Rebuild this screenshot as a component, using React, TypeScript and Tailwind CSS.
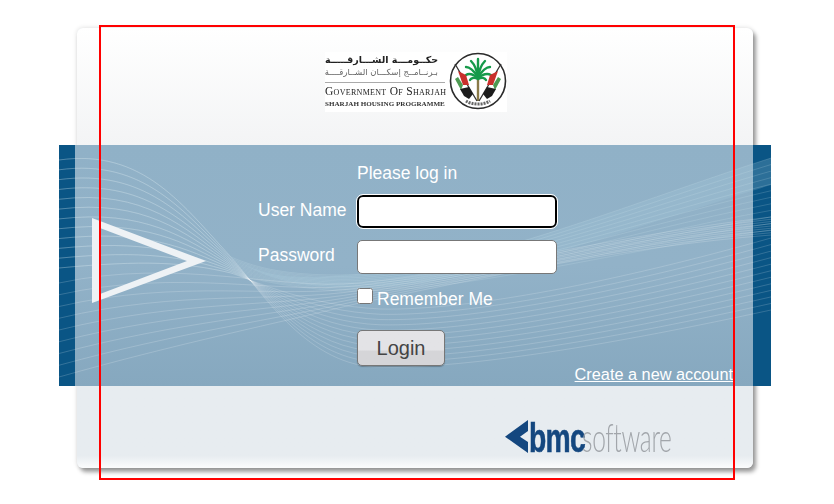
import React from "react";

const SANS = "font-['Liberation_Sans',Arial,sans-serif]";

// upper lines of the fan: same start, split at the pinch into two bundles
function upperPath(t: number) {
  const y = 15 + 108 * t;
  return `M0 ${y} C85 ${y - 12 + 4 * t} 125 ${62 + 55 * t} 172 ${112 + 16 * t}`;
}

function crossingPath(t: number) {
  return `${upperPath(t)} C205 ${150 - 10 * t} 250 ${222 - 62 * t} 321 ${222 - 58 * t} C410 ${224 - 58 * t} 560 ${198 - 62 * t} 712 ${165 - 72 * t}`;
}

function envelopePath(t: number) {
  return `${upperPath(t)} C200 ${124 + 12 * t} 230 ${130 + 12 * t} 280 ${130 + 16 * t} C400 ${130 + 20 * t} 560 ${62 + 42 * t} 712 ${13 + 72 * t}`;
}

function risingPath(t: number) {
  const y = 232 - 94 * t;
  return `M0 ${y} C120 ${y - 34 + 8 * t} 220 ${178 - 32 * t} 300 ${158 - 20 * t} C420 ${134 - 8 * t} 560 ${102 - 12 * t} 712 ${90 - 18 * t}`;
}

const TWELVE = Array.from({ length: 12 }, (_, n) => n / 11);
const NINE = Array.from({ length: 9 }, (_, n) => n / 8);

function Waves() {
  return (
    <svg className="absolute inset-0 h-full w-full" viewBox="0 0 712 241" fill="none">
      <path
        d="M172 112 C205 134 240 134 280 130 C400 130 560 62 712 13 L712 40 C560 86 400 150 280 142 C240 142 205 134 172 112 Z"
        fill="#a9cddd"
        fillOpacity="0.22"
      />
      {TWELVE.map((t) => (
        <path key={`c${t}`} d={crossingPath(t)} stroke="#ffffff" strokeOpacity="0.17" strokeWidth="1" />
      ))}
      {TWELVE.map((t) => (
        <path key={`e${t}`} d={envelopePath(t)} stroke="#d5e9f1" strokeOpacity="0.18" strokeWidth="1" />
      ))}
      {NINE.map((t) => (
        <path key={`r${t}`} d={risingPath(t)} stroke="#ffffff" strokeOpacity="0.18" strokeWidth="1" />
      ))}
      <path d="M33 73 L147 116 L33 158 Z M41 83 L41 149 L128 116 Z" fill="#eef2f5" fillRule="evenodd" />
    </svg>
  );
}

function Emblem() {
  return (
    <svg width="58" height="58" viewBox="0 0 58 58" fill="none" className="shrink-0">
      <circle cx="29" cy="29" r="27.5" fill="#fff" stroke="#2b2b2b" strokeWidth="1.6" />
      {/* palm */}
      <path d="M29 26 L29 49" stroke="#8a7a48" strokeWidth="2.4" />
      <g stroke="#169a4a" strokeWidth="2.4" strokeLinecap="round">
        <path d="M29 26 L29 7" />
        <path d="M29 26 C28 18 25 12 22 9" />
        <path d="M29 26 C30 18 33 12 36 9" />
        <path d="M29 25 C25 19 21 15 17 15" />
        <path d="M29 25 C33 19 37 15 41 15" />
        <path d="M29 26 C24 22 20 21 17 23" />
        <path d="M29 26 C34 22 38 21 42 23" />
        <path d="M29 27 C25 25 22 26 21 28" />
        <path d="M29 27 C33 25 36 26 37 28" />
      </g>
      {/* flags */}
      <path d="M6 12 L28 49" stroke="#333" strokeWidth="1.3" />
      <path d="M52 12 L30 49" stroke="#333" strokeWidth="1.3" />
      <path d="M9 19 L17 23 L20 33 L14 33 Z" fill="#c9302c" />
      <path d="M49 19 L41 23 L38 33 L44 33 Z" fill="#c9302c" />
      <path d="M6 27 L9 25 L14 33 L12 38 Z" fill="#4d9a52" />
      <path d="M52 27 L49 25 L44 33 L46 38 Z" fill="#4d9a52" />
      <path d="M11 37 L20 35 L24 42 L20 47 L15 44 Z" fill="#1c1c1c" />
      <path d="M47 37 L38 35 L34 42 L38 47 L43 44 Z" fill="#1c1c1c" />
      {/* base */}
      <path d="M17 49 C23 53 35 53 41 49" stroke="#666" strokeWidth="3" strokeDasharray="2 1" />
    </svg>
  );
}

function ShjLogo() {
  return (
    <div className="flex h-[60px] w-[182px] items-start bg-white blur-[0.4px]">
      <div className="w-[124px] shrink-0 pt-[2px]">
        <div className="w-[113px] whitespace-nowrap text-right font-['DejaVu_Sans',sans-serif] text-[9.5px] leading-[12px] font-bold text-[#222]" dir="rtl">
          حكــومـــة الشـــارقـــــة
        </div>
        <div className="w-[113px] whitespace-nowrap text-right font-['DejaVu_Sans',sans-serif] text-[8.5px] leading-[12px] text-[#666]" dir="rtl">
          بـرنــامــج إسكـــان الشــارقــــة
        </div>
        <div className="mt-[4px] h-px w-[120px] bg-[#aaa]" />
        <div className="mt-[2px] whitespace-nowrap font-['Liberation_Serif',serif] text-[11.5px] leading-[12px] tracking-[0.3px] text-[#222] [font-variant:small-caps]">
          Government Of Sharjah
        </div>
        <div className="mt-[3px] whitespace-nowrap font-['Liberation_Serif',serif] text-[7.1px] leading-[9px] font-bold text-[#333]">
          SHARJAH HOUSING PROGRAMME
        </div>
      </div>
      <Emblem />
    </div>
  );
}

function BmcLogo() {
  return (
    <div className="flex h-[36px] w-[168px] items-center">
      <svg width="24" height="34" viewBox="0 0 24 34" className="shrink-0">
        <path d="M0 16.7 L23 0 L23 11 L15 16.7 L23 22 L23 33 Z" fill="#14477f" />
      </svg>
      <div className="-mt-[1px] flex h-[36px] items-baseline whitespace-nowrap">
        <span className="inline-block w-[53px] origin-left scale-x-[0.69] font-['Liberation_Sans',sans-serif] text-[41px] leading-[36px] font-bold tracking-[-1px] text-[#14477f] [-webkit-text-stroke:0.6px_#14477f]">
          bmc
        </span>
        <span className="inline-block w-[88px] origin-left scale-x-[0.63] font-['Lato',sans-serif] text-[39px] leading-[36px] font-light tracking-[-0.5px] text-[#a2a6ab]">
          software
        </span>
      </div>
    </div>
  );
}

export default function App() {
  return (
    <div className={`relative h-[504px] w-[834px] overflow-hidden bg-white pt-[28px] pl-[77px] ${SANS}`}>
      <div className="h-[440px] w-[676px] rounded-md bg-[#e7ecf0] shadow-[3px_4px_4px_rgba(0,0,0,0.38),0_0_5px_rgba(0,0,0,0.14)]">
        <div className="h-[117px] rounded-t-md bg-gradient-to-b from-[#ffffff] to-[#f3f4f5] pt-[24px] pl-[248px]">
          <ShjLogo />
        </div>

        <div className="relative -mr-[18px] -ml-[18px] flex h-[241px] flex-col bg-gradient-to-b from-[#90b1c7] via-[#92b2c8] to-[#86a8bf]">
          <div className="absolute inset-y-0 left-0 w-[16px] bg-[#0a5585]" />
          <div className="absolute inset-y-0 right-0 w-[18px] bg-[#0a5585]" />
          <Waves />

          <div className="relative grid grid-cols-[100px_200px] pt-[14px] pl-[198px] text-[17.5px] text-white">
            <div />
            <div className="h-[28px] leading-[28px]">Please log in</div>

            <label className="mt-[8px] flex h-[33px] items-center pb-[2px] pl-px">User Name</label>
            <input
              type="text"
              className="mt-[8px] h-[33px] w-[200px] rounded-md border-2 border-black bg-white outline outline-1 outline-white"
            />

            <label className="mt-[11px] flex h-[34px] items-center pb-[2px] pl-px">Password</label>
            <input type="text" className="mt-[12px] h-[34px] w-[200px] rounded-[5px] border border-[#777] bg-white" />

            <div />
            <div className="mt-[14px] flex h-[20px] items-start">
              <input type="checkbox" className="m-0 h-4 w-4" />
              <span className="mt-[2px] ml-[4px] text-[17.5px] leading-[18px]">Remember Me</span>
            </div>

            <div />
            <button className="mt-[22px] h-[36px] w-[88px] rounded-[5px] border border-[#777] bg-gradient-to-b from-[#e3e3e6] from-[55%] to-[#d5d5d8] to-[60%] text-[20px] text-[#444] shadow-[0_1px_1px_rgba(0,0,0,0.25)]">
              Login
            </button>
          </div>

          <a className="relative mt-[-1px] mr-[38px] self-end text-[16.3px] leading-[18px] text-white underline">
            Create a new account
          </a>
        </div>

        <div className="h-[82px] rounded-b-md bg-gradient-to-b from-[#e7ecf0] from-[85%] to-[#fbfcfd] pt-[33px] pl-[428px]">
          <BmcLogo />
        </div>
      </div>

      <div className="pointer-events-none absolute top-[25px] left-[99px] h-[455px] w-[636px] border-2 border-[#ff0000]" />
    </div>
  );
}
